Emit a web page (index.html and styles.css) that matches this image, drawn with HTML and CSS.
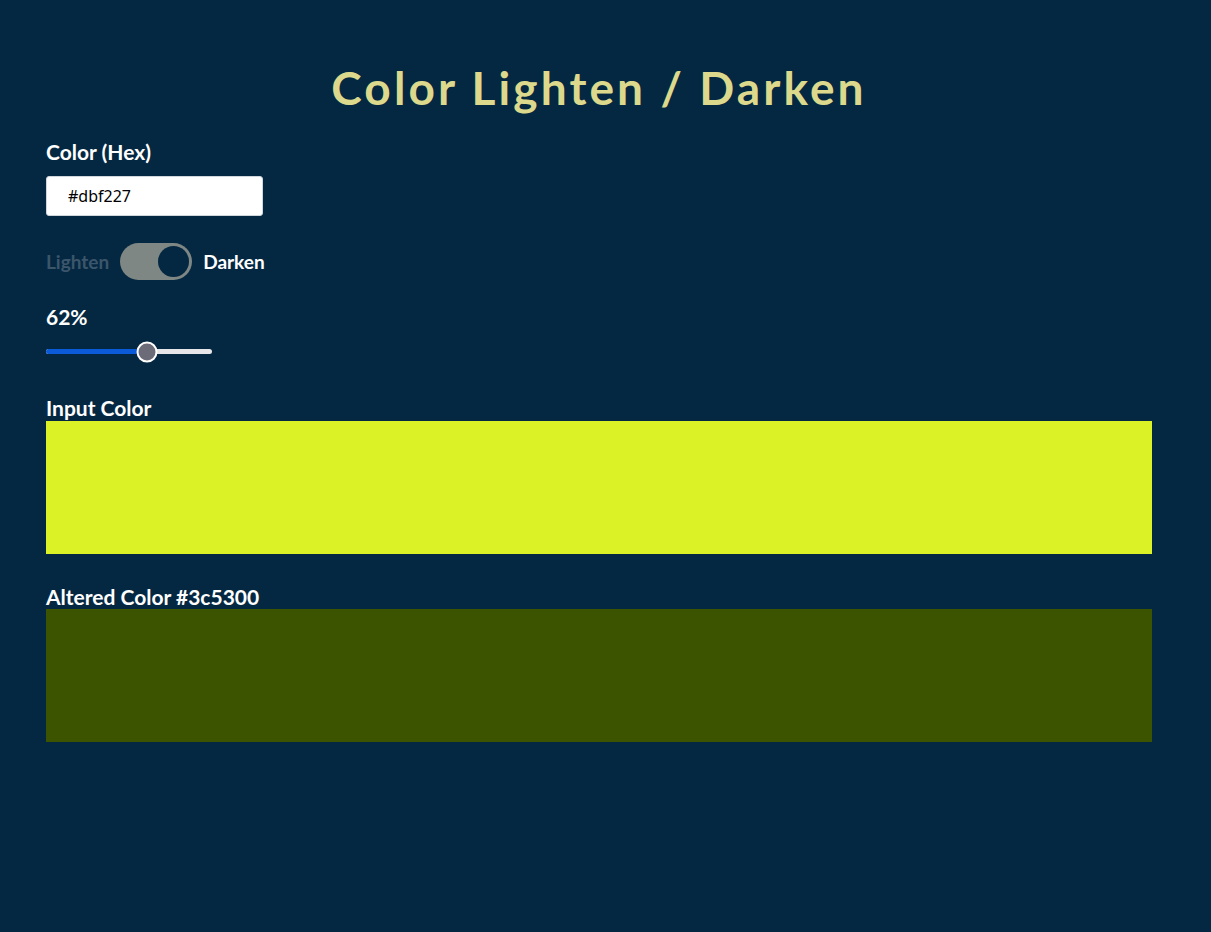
FILE: index.html
```html
<!DOCTYPE html>
<html lang="en">
<head>
<meta charset="utf-8">
<title>Color Lighten / Darken</title>
<link rel="stylesheet" href="styles.css">
</head>
<body>
<main class="app">
  <h1 class="title">Color Lighten / Darken</h1>
  <label class="label" for="hex">Color (Hex)</label>
  <input id="hex" class="hex-input" type="text" value="#dbf227">
  <div class="toggle-row">
    <span class="toggle-text muted">Lighten</span>
    <span class="toggle"><span class="knob"></span></span>
    <span class="toggle-text">Darken</span>
  </div>
  <div class="percent">62%</div>
  <div class="slider">
    <div class="slider-fill" style="width: 61%"></div>
    <div class="slider-thumb" style="left: 61%"></div>
  </div>
  <div class="swatch-label">Input Color</div>
  <div class="swatch" style="background: #dbf227"></div>
  <div class="swatch-label">Altered Color #3c5300</div>
  <div class="swatch" style="background: #3c5300"></div>
</main>
</body>
</html>
```
FILE: styles.css
```css
html, body {
  margin: 0;
  padding: 0;
  background: #052842;
  min-height: 100%;
}
body {
  font-family: Lato, "Open Sans", sans-serif;
  color: #ffffff;
}
.app {
  width: 1106px;
  margin-left: 46px;
  padding-top: 58px;
  display: flex;
  flex-direction: column;
  align-items: flex-start;
}
.title {
  align-self: stretch;
  text-align: center;
  margin: 0 0 22px 0;
  font-size: 46px;
  font-weight: 700;
  letter-spacing: 3.1px;
  color: #dcd88c;
  line-height: 60px;
}
.label {
  font-size: 21px;
  line-height: 24px;
  font-weight: 700;
  margin-bottom: 12px;
}
.hex-input {
  box-sizing: border-box;
  width: 217px;
  height: 40px;
  border: 1px solid #cfd6dc;
  border-radius: 3px;
  padding: 0 0 0 21px;
  font-family: "Noto Sans", "Open Sans", sans-serif;
  font-size: 16px;
  color: #000;
  background: #fff;
  outline: none;
}
.toggle-row {
  display: flex;
  align-items: center;
  gap: 11px;
  margin-top: 27px;
  height: 37px;
}
.toggle-text {
  font-size: 19px;
  font-weight: 700;
}
.toggle-text.muted {
  color: #3b566b;
}
.toggle {
  box-sizing: border-box;
  width: 72px;
  height: 37px;
  border-radius: 19px;
  background: #7f8784;
  padding: 3px;
  display: flex;
  justify-content: flex-end;
}
.knob {
  width: 31px;
  height: 31px;
  border-radius: 50%;
  background: #052842;
}
.percent {
  margin-top: 25px;
  font-size: 21px;
  font-weight: 700;
  line-height: 24px;
}
.slider {
  position: relative;
  margin-top: 20px;
  width: 166px;
  height: 5px;
  border-radius: 3px;
  background: #e6e6e8;
}
.slider-fill {
  height: 100%;
  border-radius: 3px;
  background: #0b5bd8;
}
.slider-thumb {
  position: absolute;
  top: 50%;
  width: 17px;
  height: 17px;
  border: 2px solid #ffffff;
  border-radius: 50%;
  background: #6c6b78;
  transform: translate(-50%, -50%);
}
.swatch-label {
  font-size: 21px;
  font-weight: 700;
  line-height: 24px;
  margin-top: 42px;
}
.swatch {
  align-self: stretch;
  height: 133px;
  margin-top: 1px;
}
.swatch + .swatch-label {
  margin-top: 31px;
}
.swatch + .swatch-label + .swatch {
  margin-top: 0;
}
```
